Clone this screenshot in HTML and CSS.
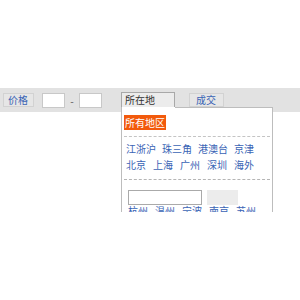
FILE: index.html
```html
<!DOCTYPE html>
<html lang="zh-CN">
<head>
  <meta charset="UTF-8">
  <title>筛选</title>
  <link rel="stylesheet" href="styles.css">
</head>
<body>
  <!-- Filter bar -->
  <div class="filter-bar">
    <a class="tab" href="#">价格</a>
    <div class="price-range">
      <input type="text" class="price-input">
      <span class="dash">-</span>
      <input type="text" class="price-input">
    </div>
    <div class="area">
      <div class="tab active">所在地</div>
      <!-- Area dropdown -->
      <div class="area-panel">
        <div class="all-area">所有地区</div>
        <div class="area-group">
          <div class="area-row">
            <a href="#">江浙沪</a>
            <a href="#">珠三角</a>
            <a href="#">港澳台</a>
            <a href="#">京津</a>
          </div>
          <div class="area-row wide-gap">
            <a href="#">北京</a>
            <a href="#">上海</a>
            <a href="#">广州</a>
            <a href="#">深圳</a>
            <a href="#">海外</a>
          </div>
        </div>
        <div class="area-search">
          <input type="text" class="city-input">
          <button class="city-btn"></button>
        </div>
        <div class="area-row wide-gap cities">
          <a href="#">杭州</a>
          <a href="#">温州</a>
          <a href="#">宁波</a>
          <a href="#">南京</a>
          <a href="#">苏州</a>
        </div>
      </div>
    </div>
    <a class="tab deal" href="#">成交</a>
  </div>
</body>
</html>
```

FILE: styles.css
```css
/* Basic page styling */
html, body {
  min-height: 300px;
}
body {
  margin: 0;
  padding-top: 88px;
  box-sizing: border-box;
  background: #fff;
  font-family: "Noto Sans CJK SC", "Liberation Sans", sans-serif;
  font-size: 10px;
}
a {
  color: #3a64b5;
  text-decoration: none;
}
/* Filter bar */
.filter-bar {
  height: 24px;
  background: #e2e2e2;
  display: flex;
  align-items: flex-start;
  padding: 5px 0 0 3px;
  box-sizing: border-box;
}
.tab {
  display: block;
  height: 12px;
  line-height: 12px;
  padding: 0 5px 0 4px;
  border: 1px solid #d2d2d2;
  background: #e6e6e6;
  white-space: nowrap;
}
.price-range {
  display: flex;
  align-items: center;
  margin-left: 8px;
}
.price-input {
  width: 21px;
  height: 13px;
  padding: 0;
  border: 1px solid #c8c8c8;
  background: #fff;
  box-sizing: content-box;
  margin: -1px 0 0;
}
.dash {
  width: 14px;
  text-align: center;
  color: #555;
}
/* Area tab with dropdown */
.area {
  position: relative;
  margin-left: 19px;
  margin-top: -1px;
}
.tab.active {
  width: 46px;
  height: 15px;
  line-height: 14px;
  padding: 0 3px;
  border-color: #a8a8a8;
  border-bottom: none;
  background: #ececec;
  color: #333;
}
.tab.deal {
  margin-left: 14px;
  padding: 0 7px 0 6px;
}
.area-panel {
  position: absolute;
  top: 15px;
  left: 0;
  width: 152px;
  height: 105px;
  overflow: hidden;
  background: #fff;
  border: 1px solid #bdbdbd;
  border-top: none;
  border-bottom: none;
  padding: 0 2px;
  box-sizing: border-box;
}
.area-panel::before {
  content: "";
  position: absolute;
  top: 0;
  left: 53px;
  right: 0;
  border-top: 1px solid #bdbdbd;
}
.all-area {
  display: inline-block;
  margin-top: 8px;
  padding: 0 1px;
  height: 15px;
  line-height: 15px;
  background: #f25a0c;
  color: #fff;
}
.area-group {
  margin-top: 6px;
  border-top: 1px dashed #c4c4c4;
  border-bottom: 1px dashed #b5b5b5;
  padding: 4px 0 6px 2px;
}
.area-row {
  display: flex;
  gap: 6px;
  line-height: 16px;
}
.area-row.wide-gap {
  gap: 7px;
}
.area-search {
  display: flex;
  align-items: center;
  gap: 5px;
  margin: 10px 0 0 4px;
}
.city-input {
  width: 72px;
  height: 13px;
  padding: 0;
  border: 1px solid #aaa;
  margin: 0;
}
.city-btn {
  width: 31px;
  height: 15px;
  border: none;
  background: #ececec;
  padding: 0;
  margin-top: -1px;
}
.cities {
  margin: -2px 0 0 4px;
}
```
